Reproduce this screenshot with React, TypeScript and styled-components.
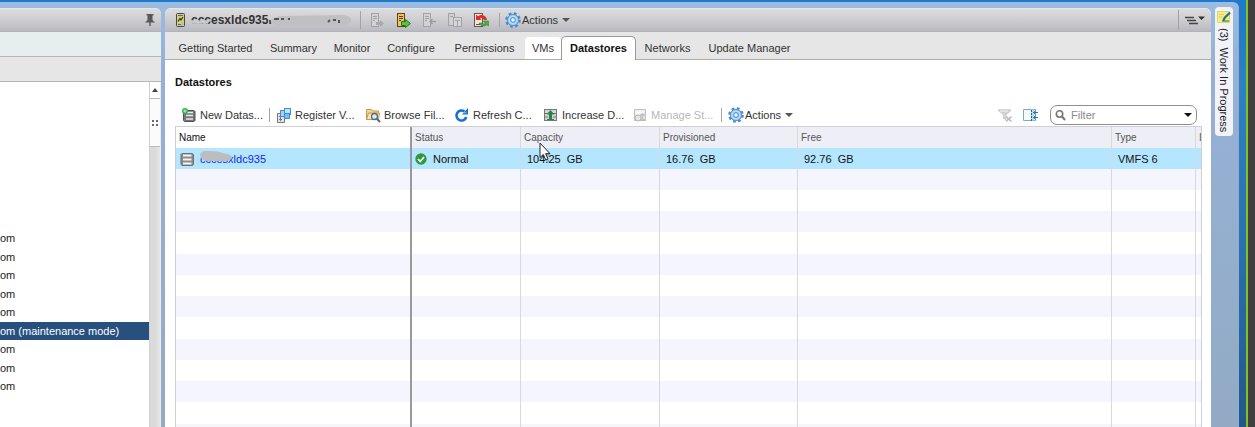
import React from "react";
import styled, { createGlobalStyle, css } from "styled-components";

const GlobalStyle = createGlobalStyle`
  * { box-sizing: border-box; }
  html, body { margin: 0; height: 100%; }
  #root { height: 100%; }
  body, button, input {
    font-family: "Liberation Sans", Arial, sans-serif;
    font-size: 11px;
    color: #222;
  }
`;

const Desktop = styled.div`
  display: flex;
  height: 100vh;
  overflow: hidden;
  padding-top: 2px;
  background: linear-gradient(#1f78cb, #2f80c4 20%, #2a6fae 60%, #24568c);
`;

const Workspace = styled.div`
  display: flex;
  flex: 1;
  min-width: 0;
  padding-top: 6px;
  border-top-right-radius: 6px;
  background: linear-gradient(#9bbde2, #97b0d8 60px, #94afcf 50%, #92aac4);
`;

const DesktopEdge = styled.div`
  width: 16px;
  flex: none;
  margin-top: -2px;
  border-right: 7px solid #404040;
  &::after {
    content: "";
    display: block;
    height: 100%;
    margin-left: 7px;
    background: #7fc41c;
  }
`;

const panel = css`
  display: flex;
  flex-direction: column;
  overflow: hidden;
`;

const Navigator = styled.aside`
  ${panel}
  width: 161px;
  flex: none;
  margin-right: 4px;
  border-top-right-radius: 6px;
  background: #fff;
`;

const Main = styled.main`
  ${panel}
  flex: 1;
  min-width: 0;
  border-radius: 6px 6px 0 0;
  background: #fff;
`;

const TitleBar = styled.header`
  display: flex;
  align-items: center;
  flex: none;
  height: 24px;
  padding: 0 3px 0 8px;
  border-top: 1px solid #e4e6ea;
  border-bottom: 1px solid #b3b3b8;
  background: linear-gradient(#dcdcde, #cfcfd2 45%, #b9b9c1);
`;

const NavTitleBar = styled(TitleBar)`
  justify-content: flex-end;
  padding: 0 5px;
`;

const NavBand = styled.div<{ $tone: string }>`
  flex: none;
  height: 25px;
  border-bottom: 1px solid #b5b5b5;
  background: ${(p) => p.$tone};
`;

const NavBody = styled.div`
  display: flex;
  flex: 1;
  min-height: 0;
`;

const HostList = styled.ul`
  flex: 1;
  margin: 0;
  padding: 147px 0 0;
  list-style: none;
  overflow: hidden;
  white-space: nowrap;
`;

const HostItem = styled.li<{ $selected?: boolean }>`
  height: 19px;
  line-height: 18px;
  font-size: 11px;
  background: ${(p) => (p.$selected ? "#28507f" : "transparent")};
  color: ${(p) => (p.$selected ? "#fff" : "#222")};
  &:nth-child(even) { height: 18px; }
`;

const ScrollTrack = styled.div`
  display: flex;
  flex-direction: column;
  width: 12px;
  border-left: 1px solid #cfcfcf;
  border-right: 1px solid #ececec;
  background: linear-gradient(90deg, #dadada 50%, #e6e6e6);
`;

const ScrollButton = styled.button`
  display: flex;
  align-items: center;
  justify-content: center;
  height: 17px;
  padding: 0;
  border: 0;
  border-bottom: 1px solid #bbb;
  background: #fdfdfd;
`;

const ScrollThumb = styled.div`
  display: flex;
  align-items: center;
  justify-content: center;
  height: 48px;
  border-bottom: 1px solid #bbb;
  background: #fbfbfb;
`;

const HostName = styled.h1`
  position: relative;
  width: 168px;
  margin: 0;
  padding-left: 2px;
  line-height: 20px;
  font-size: 12px;
  font-weight: bold;
  color: #333;
  svg { position: absolute; left: 0; top: 2px; }
`;

const Divider = styled.span<{ $gap?: number; $h?: number }>`
  flex: none;
  width: 1px;
  height: ${(p) => p.$h ?? 18}px;
  margin: 0 ${(p) => p.$gap ?? 6}px;
  background: #a2a2a8;
`;

const IconButton = styled.button`
  display: flex;
  align-items: center;
  justify-content: center;
  width: 26px;
  height: 20px;
  padding: 0;
  border: 0;
  background: none;
`;

const ActionButton = styled.button<{ $width?: number }>`
  display: flex;
  flex: none;
  align-items: center;
  gap: ${(p) => (p.$width ? 3 : 1)}px;
  width: ${(p) => (p.$width ? `${p.$width}px` : "auto")};
  height: 20px;
  padding: 0;
  border: 0;
  background: none;
  color: #333;
  white-space: nowrap;
  &:disabled { color: #b8b8b8; }
`;

const Caret = styled.span`
  width: 0;
  margin-left: 3px;
  border: 4px solid transparent;
  border-top-color: #555;
  border-bottom: 0;
`;

const Spacer = styled.span`
  flex: 1;
`;

const ToolGroup = styled.div`
  display: flex;
  align-items: center;
  padding-left: 6px;
`;

const TabBar = styled.nav`
  display: flex;
  align-items: flex-end;
  flex: none;
  height: 28px;
  padding-left: 5px;
  border-bottom: 1px solid #adadad;
  background: #e6e6e6;
`;

const Tab = styled.a<{ $state?: "hover" | "active"; $width: number }>`
  flex: none;
  width: ${(p) => p.$width}px;
  height: 22px;
  line-height: 23px;
  border-radius: 4px 4px 0 0;
  text-align: center;
  text-decoration: none;
  white-space: nowrap;
  color: #333;
  ${(p) => p.$state === "hover" && css`background: #fff;`}
  ${(p) =>
    p.$state === "active" &&
    css`
      height: 24px;
      margin-bottom: -1px;
      border: 1px solid #999;
      border-bottom: 0;
      border-radius: 5px 5px 0 0;
      background: #fff;
      font-weight: bold;
      color: #111;
    `}
`;

const Content = styled.section`
  ${panel}
  flex: 1;
  min-height: 0;
  padding: 0 9px 0 10px;
`;

const Heading = styled.h2`
  flex: none;
  margin: 0;
  line-height: 44px;
  font-size: 11px;
  font-weight: bold;
  color: #111;
`;

const Toolbar = styled.div`
  display: flex;
  align-items: center;
  flex: none;
  height: 22px;
  padding: 0 5px 0 6px;
`;

const FilterBox = styled.label`
  display: flex;
  align-items: center;
  gap: 4px;
  width: 147px;
  height: 20px;
  margin-left: 6px;
  padding: 0 4px;
  border: 1px solid #8f8f8f;
  border-radius: 7px;
  background: #fff;
  input {
    flex: 1;
    min-width: 0;
    padding: 0;
    border: 0;
    outline: 0;
    background: none;
  }
  input::placeholder { color: #8a8a8a; opacity: 1; }
`;

const FilterCaret = styled(Caret)`
  border-top-color: #111;
`;

const GridArea = styled.div`
  flex: 1;
  min-height: 0;
  overflow: hidden;
  border: 1px solid #d0d0d4;
  border-bottom: 0;
`;

const Grid = styled.table`
  width: 100%;
  table-layout: fixed;
  border-collapse: separate;
  border-spacing: 0;
  th, td {
    height: 21px;
    padding: 0 0 0 6px;
    border-right: 1px solid #d9d9dc;
    line-height: 20px;
    text-align: left;
    white-space: nowrap;
    overflow: hidden;
  }
  th {
    position: relative;
    padding-left: 3px;
    line-height: 21px;
    font-size: 10px;
    font-weight: normal;
    color: #555;
    background: #eeeef6;
    overflow: visible;
  }
  th:first-child { background: #fff; color: #111; }
  th:first-child, td:first-child { border-right: 2px solid #999; }
  th:last-child, td:last-child { border-right: 0; }
  th:last-child { overflow: hidden; }
  td { color: #111; }
`;

const Row = styled.tr<{ $selected?: boolean }>`
  background: ${(p) => (p.$selected ? "#b5e6ff" : "#fff")};
  ${(p) =>
    !p.$selected &&
    css`
      &:nth-child(even) { background: #f5f6fd; }
      &:nth-child(4n + 1) td { height: 22px; }
    `}
`;

const CellWithIcon = styled.div<{ $gap: number }>`
  display: flex;
  align-items: center;
  gap: ${(p) => p.$gap}px;
  height: 21px;
  margin-left: -3px;
`;

const MaskedLink = styled.a`
  position: relative;
  color: #1428f0;
  text-decoration: none;
  svg { position: absolute; left: 0; top: 2px; }
`;

const Pointer = styled.svg`
  position: absolute;
  left: 18px;
  top: 15px;
  z-index: 2;
`;

const SideRail = styled.aside`
  width: 28px;
  flex: none;
  padding-left: 4px;
  border-right: 1px solid #8cb0c8;
`;

const WorkTab = styled.button`
  display: flex;
  flex-direction: column;
  align-items: center;
  gap: 4px;
  width: 18px;
  height: 129px;
  padding: 3px 0;
  border: 0;
  border-radius: 4px;
  margin-top: -1px;
  background: #f1f3f8;
  white-space: nowrap;
  span { writing-mode: vertical-rl; line-height: 16px; }
`;

const Svg = ({ children, w = 16, h = 16 }: { children: React.ReactNode; w?: number; h?: number }) => (
  <svg width={w} height={h} viewBox={`0 0 ${w} ${h}`} aria-hidden="true" style={{ flex: "none" }}>
    {children}
  </svg>
);

const GearIcon = () => (
  <Svg>
    <circle cx="8" cy="8" r="6.3" fill="none" stroke="#4a88c8" strokeWidth="3" strokeDasharray="2.6 2.35" />
    <circle cx="8" cy="8" r="5.7" fill="#8fc2f0" stroke="#5595d2" />
    <circle cx="8" cy="8" r="3.8" fill="none" stroke="#b9dcf9" strokeWidth="1.6" />
    <circle cx="8" cy="8" r="2.3" fill="#eef6fd" stroke="#4c8ccb" />
  </Svg>
);

const HostIcon = () => (
  <Svg>
    <rect x="3.5" y="1.5" width="8" height="13" rx="1" fill="#c9c9a0" stroke="#4a4a42" />
    <path d="M5 3.5h5M5 12.5h3" stroke="#6a6a58" />
    <path d="M5 6l5-2v4l-5 3z" fill="#e2dc3a" />
    <path d="M5 9.500l2-3 1 1.500 2-3" fill="none" stroke="#2c2c20" strokeWidth="1.200" />
    <path d="M9 12.5h1" stroke="#b7bd2b" strokeWidth="2" />
  </Svg>
);

const Tower = ({ tint, line }: { tint: string; line: string }) => (
  <>
    <rect x="2.5" y="1.5" width="7" height="13" fill={tint} stroke={line} />
    <path d="M4 4.5h4M4 6.5h4M4 8.5h2" stroke={line} />
  </>
);

const TowerMuted = () => (
  <Svg>
    <Tower tint="#d2d2d4" line="#a3a3a6" />
    <path d="M7 10h4V8l4 3.5L11 15v-2H7z" fill="#a9a9ac" />
  </Svg>
);

const TowerGo = () => (
  <Svg>
    <Tower tint="#f2c25e" line="#5c4320" />
    <path d="M6.500 9.500h4v-2l5 4-5 4v-2h-4z" fill="#58c43d" stroke="#287a1c" />
  </Svg>
);

const TowerBack = () => (
  <Svg>
    <Tower tint="#d2d2d4" line="#a3a3a6" />
    <path d="M15 9.500H9M11.500 7L9 9.500l2.500 2.500" fill="none" stroke="#9d9da0" strokeWidth="1.4" />
  </Svg>
);

const TowerCopy = () => (
  <Svg>
    <rect x="1.5" y="1.5" width="6" height="12" fill="#d0d0d2" stroke="#a3a3a6" />
    <rect x="6.5" y="5.500" width="8" height="9" fill="#d6d6d8" stroke="#a3a3a6" />
    <path d="M3 4.500h3M8 8.500h5M10.500 8v6" stroke="#a3a3a6" />
  </Svg>
);

const TowerSync = () => (
  <Svg>
    <rect x="1.500" y="1.500" width="8" height="13" fill="#f0e6dc" stroke="#6b5348" />
    <path d="M3 12.500h4" stroke="#6b5348" />
    <path d="M3 8V2.500l2 1.800A5.500 5.500 0 0 1 14 8h-3a3 3 0 0 0-4-1.500L8.500 8z" fill="#dc2f2a" />
    <path d="M15.500 9v5l-1.500-1.300A5 5 0 0 1 6 11h2.500a3 3 0 0 0 3.800.5L10.500 9z" fill="#45b33e" stroke="#277a27" strokeWidth=".5" />
  </Svg>
);

const DatastoreIcon = () => (
  <Svg>
    <path d="M3 2.500h10.500l1 1v10l-1 1H3l-1-1v-10z" fill="#8b8b8b" stroke="#6f6f6f" />
    <path d="M4 4.500h8.500M4 8.500h8.500M4 12.500h8.500" stroke="#f4f4f4" strokeWidth="2" />
  </Svg>
);

const NewDatastoreIcon = () => (
  <Svg>
    <path d="M3.500 3.500h9.500l1 1v9l-1 1H3.500l-1-1v-9z" fill="#777" stroke="#505050" />
    <path d="M5 5.500h7M5 8.500h7M5 12h7" stroke="#e9e9e9" strokeWidth="1.600" />
    <circle cx="4" cy="4" r="3" fill="#35b34a" />
    <path d="M4 2.300v3.400M2.300 4h3.400" stroke="#bdf0c4" />
  </Svg>
);

const RegisterIcon = () => (
  <Svg>
    <path d="M1.500 6.500h7v9h-7z" fill="#e3e3e3" stroke="#777" />
    <path d="M3 9.500h3M3 12.500h3M4.500 8v6" stroke="#777" />
    <rect x="4.500" y="3.500" width="6" height="6" fill="#9fd2f5" stroke="#3d8fd0" />
    <rect x="8.500" y="1.500" width="6" height="6" fill="#bfe3fb" stroke="#3d8fd0" />
    <rect x="8.500" y="6.500" width="5" height="5" fill="#78bdf0" stroke="#3d8fd0" />
  </Svg>
);

const BrowseIcon = () => (
  <Svg>
    <path d="M1.500 12.500v-10h5l1 1.500h6v8.500z" fill="#f6d48c" stroke="#c99a48" />
    <path d="M1.500 12.500l2-6.500h11l-1 6.500z" fill="#fbe5b4" stroke="#c99a48" />
    <circle cx="9.500" cy="9.500" r="3" fill="#d4ecfa" stroke="#55697c" strokeWidth="1.300" />
    <path d="M12 12l3 3" stroke="#55697c" strokeWidth="2" />
  </Svg>
);

const RefreshIcon = () => (
  <Svg>
    <path d="M10.500 4.500A5 5 0 1 0 12.300 10" fill="none" stroke="#1674cf" strokeWidth="2.600" />
    <path d="M14 1v6.500H8z" fill="#1674cf" />
    <path d="M9.500 5.500l3 .5" stroke="#8cc5f4" />
  </Svg>
);

const IncreaseIcon = () => (
  <Svg>
    <rect x="1.500" y="2.500" width="12" height="11" fill="#d6d6d6" stroke="#777" />
    <path d="M2 6.500h3M2 10h3M10 6.500h3M10 10h3" stroke="#777" />
    <path d="M7.500 3l4 4.500H9V12H6V7.500H3.500z" fill="#278445" />
    <path d="M4 12.500h7" stroke="#278445" />
  </Svg>
);

const ManageIcon = () => (
  <Svg>
    <path d="M2.500 2.500h11v11h-11z" fill="#ececec" stroke="#c2c2c2" />
    <path d="M4 5.500h8M4 9h3" stroke="#fff" strokeWidth="2" />
    <circle cx="6" cy="11" r="3" fill="#e5e5e5" stroke="#b5b5b5" />
    <path d="M8 8h5M10.500 6v8M9 13h5" stroke="#bcbcbc" strokeWidth="1.500" />
  </Svg>
);

const ClearFilterIcon = () => (
  <Svg>
    <path d="M1 2h13v2L9.500 8v6L6 11.500V8L1 4z" fill="#d2d2d2" />
    <path d="M3 4h8" stroke="#f2f2f2" />
    <path d="M9 9.500l5.500 5M14.500 9.500l-5.500 5" stroke="#b9b9b9" strokeWidth="1.600" />
  </Svg>
);

const ColumnsIcon = () => (
  <Svg>
    <path d="M.5 2.500h12v11H.5z" fill="#f4fafd" stroke="#7fa9bf" />
    <path d="M8 2.500h3v11H8z" fill="#b7dcec" />
    <path d="M8.500 3v11" stroke="#2f5e80" strokeDasharray="2 1" />
    <path d="M10 5.500h5M10 10.500h5M12.500 3.500l-2 2 2 2M12.500 8.500l-2 2 2 2" fill="none" stroke="#277ca8" />
  </Svg>
);

const SearchIcon = () => (
  <Svg w={12} h={12}>
    <circle cx="4.500" cy="5" r="3.200" fill="none" stroke="#777" strokeWidth="1.600" />
    <path d="M7 7.500l3 3.500" stroke="#777" strokeWidth="2" />
  </Svg>
);

const OkIcon = () => (
  <Svg w={12} h={12}>
    <circle cx="6" cy="6" r="5.700" fill="#2c9a3a" />
    <path d="M3 6l2.300 2.500L9 4" fill="none" stroke="#fff" strokeWidth="1.800" />
  </Svg>
);

const PinIcon = () => (
  <Svg w={12} h={14}>
    <path d="M2.500 1h7v1.500h-1V7L11 9.500H1L3.500 7V2.500h-1z" fill="#59595c" />
    <path d="M6 9v4" stroke="#59595c" strokeWidth="1.400" />
  </Svg>
);

const MenuLinesIcon = () => (
  <Svg w={22} h={12}>
    <path d="M1 3.500h9M3 6.500h9M5 9.500h9" stroke="#444" strokeWidth="1.600" />
    <path d="M14 2.500h7l-3.500 3.500z" fill="#333" />
  </Svg>
);

const NoteIcon = () => (
  <Svg w={14} h={14}>
    <path d="M.5 1.500h12v11H.5z" fill="#f5ef7c" stroke="#ddd678" />
    <path d="M2 4.500h5M2 7h4" stroke="#d6cf6c" />
    <path d="M6 10h6v2H5z" fill="#7db85c" />
    <path d="M13 2.500L8 7.500 6 11" fill="none" stroke="#2c6f8f" strokeWidth="2.200" />
  </Svg>
);

const hosts = Array.from({ length: 9 }, (_, i) => (i === 5 ? "om (maintenance mode)" : "om"));

const tabs: { label: string; width: number; state?: "hover" | "active" }[] = [
  { label: "Getting Started", width: 91 },
  { label: "Summary", width: 65 },
  { label: "Monitor", width: 52 },
  { label: "Configure", width: 66 },
  { label: "Permissions", width: 81 },
  { label: "VMs", width: 36, state: "hover" },
  { label: "Datastores", width: 75, state: "active" },
  { label: "Networks", width: 63 },
  { label: "Update Manager", width: 101 },
];

const hostActions = [
  { label: "Enter maintenance mode", icon: <TowerMuted />, off: true },
  { label: "Exit maintenance mode", icon: <TowerGo /> },
  { label: "Connect", icon: <TowerBack />, off: true },
  { label: "Disconnect", icon: <TowerCopy />, off: true },
  { label: "Reboot", icon: <TowerSync /> },
];

const gridActions = [
  { label: "Register V...", icon: <RegisterIcon /> },
  { label: "Browse Fil...", icon: <BrowseIcon /> },
  { label: "Refresh C...", icon: <RefreshIcon /> },
  { label: "Increase D...", icon: <IncreaseIcon /> },
  { label: "Manage St...", icon: <ManageIcon />, off: true },
];

const blankRows = Array.from({ length: 14 }, (_, i) => i);

export default function App() {
  return (
    <>
      <GlobalStyle />
      <Desktop>
        <Workspace>
          <Navigator>
            <NavTitleBar>
              <PinIcon />
            </NavTitleBar>
            <NavBand $tone="#e6efee" />
            <NavBand $tone="#e6e6e6" />
            <NavBody>
              <HostList>
                {hosts.map((name, i) => (
                  <HostItem key={i} $selected={i === 5}>{name}</HostItem>
                ))}
              </HostList>
              <ScrollTrack>
                <ScrollButton aria-label="Scroll up">
                  <Svg w={6} h={4}><path d="M0 4l3-4 3 4z" fill="#444" /></Svg>
                </ScrollButton>
                <ScrollThumb>
                  <Svg w={6} h={6}><path d="M0 1h2M4 1h2M0 5h2M4 5h2" stroke="#667" strokeWidth="2" /></Svg>
                </ScrollThumb>
              </ScrollTrack>
            </NavBody>
          </Navigator>

          <Main>
            <TitleBar>
              <HostIcon />
              <HostName>
                cccesxldc935.
                <svg width="164" height="18" viewBox="0 0 164 18" aria-hidden="true">
                  <path d="M0 9l3-1 3 1 3-1 3 1 4-1 4 1-1 3-3-1-4 1-3-1-3 1-6-1z" fill="#c9c9cd" />
                  <path d="M82 10q4-7 12-6l62-1q8 2 6 7-5 5-20 4H96q-12 0-14-4z" fill="#c0c0c2" />
                  <path d="M80 9h2M85 7h5M92 7h3M99 7h2M139 10l2-2M144 8h3M150 8v3" stroke="#555" strokeWidth="2" />
                </svg>
              </HostName>
              <Divider $gap={3} />
              {hostActions.map((a) => (
                <IconButton key={a.label} aria-label={a.label} disabled={a.off}>{a.icon}</IconButton>
              ))}
              <Divider $gap={5} $h={14} />
              <ActionButton>
                <GearIcon />
                Actions
                <Caret />
              </ActionButton>
              <Spacer />
              <Divider $gap={3} $h={20} />
              <IconButton aria-label="View options"><MenuLinesIcon /></IconButton>
            </TitleBar>
            <TabBar>
              {tabs.map((t) => (
                <Tab key={t.label} href="#" $width={t.width} $state={t.state}>{t.label}</Tab>
              ))}
            </TabBar>
            <Content>
              <Heading>Datastores</Heading>
              <Toolbar>
                <ActionButton $width={88}>
                  <NewDatastoreIcon />
                  New Datas...
                </ActionButton>
                <Divider $gap={0} $h={14} />
                <ToolGroup>
                  {gridActions.map((a) => (
                    <ActionButton key={a.label} $width={89} disabled={a.off}>
                      {a.icon}
                      {a.label}
                    </ActionButton>
                  ))}
                </ToolGroup>
                <Divider $gap={0} $h={14} />
                <ToolGroup>
                  <ActionButton>
                    <GearIcon />
                    Actions
                    <Caret />
                  </ActionButton>
                </ToolGroup>
                <Spacer />
                <IconButton aria-label="Clear filter" disabled><ClearFilterIcon /></IconButton>
                <IconButton aria-label="Choose columns"><ColumnsIcon /></IconButton>
                <FilterBox>
                  <SearchIcon />
                  <input type="text" placeholder="Filter" aria-label="Filter" />
                  <FilterCaret />
                </FilterBox>
              </Toolbar>
              <GridArea>
                <Grid>
                  <colgroup>
                    <col style={{ width: 236 }} />
                    <col style={{ width: 109 }} />
                    <col style={{ width: 139 }} />
                    <col style={{ width: 138 }} />
                    <col />
                    <col style={{ width: 84 }} />
                    <col style={{ width: 5 }} />
                  </colgroup>
                  <thead>
                    <tr>
                      <th>Name</th>
                      <th>Status</th>
                      <th>
                        Capacity
                        <Pointer width="14" height="22" viewBox="0 0 14 22" aria-hidden="true">
                          <path d="M3 3l9 11-4 1 3 5-2 1-4-6z" fill="#667" fillOpacity=".4" />
                          <path d="M1 1v14.500l3.300-3 2.500 5.500 2.200-1-2.400-5.300H11z" fill="#fff" stroke="#222" />
                        </Pointer>
                      </th>
                      <th>Provisioned</th>
                      <th>Free</th>
                      <th>Type</th>
                      <th>I</th>
                    </tr>
                  </thead>
                  <tbody>
                    <Row $selected>
                      <td>
                        <CellWithIcon $gap={5}>
                          <DatastoreIcon />
                          <MaskedLink href="#">
                            cccesxldc935
                            <svg width="36" height="12" viewBox="0 0 36 12" aria-hidden="true">
                              <path d="M0 3q4-5 11-3 7 0 12 2 8 1 9 4 0 4-7 4H8Q0 10 0 3z" fill="#bdbdbf" />
                            </svg>
                          </MaskedLink>
                        </CellWithIcon>
                      </td>
                      <td>
                        <CellWithIcon $gap={6}>
                          <OkIcon />
                          Normal
                        </CellWithIcon>
                      </td>
                      <td>104.25&nbsp; GB</td>
                      <td>16.76&nbsp; GB</td>
                      <td>92.76&nbsp; GB</td>
                      <td>VMFS 6</td>
                      <td />
                    </Row>
                    {blankRows.map((r) => (
                      <Row key={r}>
                        <td /><td /><td /><td /><td /><td /><td />
                      </Row>
                    ))}
                  </tbody>
                </Grid>
              </GridArea>
            </Content>
          </Main>

          <SideRail>
            <WorkTab>
              <NoteIcon />
              <span>(3)&nbsp; Work In Progress</span>
            </WorkTab>
          </SideRail>
        </Workspace>
        <DesktopEdge />
      </Desktop>
    </>
  );
}
